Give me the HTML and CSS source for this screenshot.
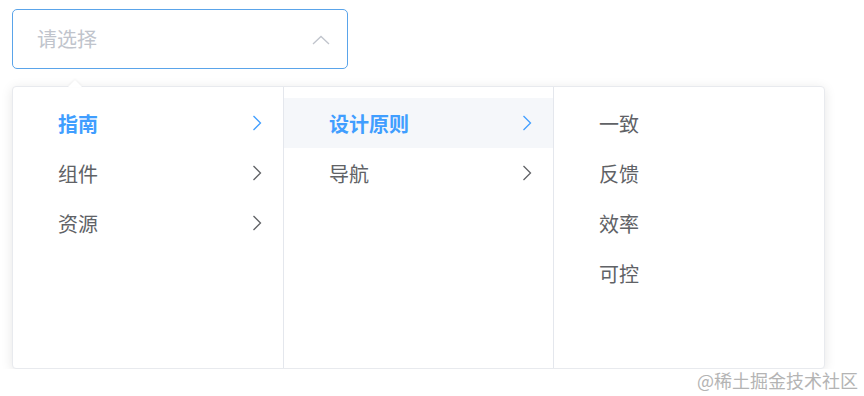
FILE: index.html
```html
<!DOCTYPE html>
<html lang="zh-CN">
<head>
<meta charset="utf-8">
<title>Cascader</title>
<link rel="stylesheet" href="styles.css">
</head>
<body>
<div class="page">
  <div class="input">
    <span class="placeholder">请选择</span>
    <svg class="caret" width="18" height="10" viewBox="0 0 18 10"><path d="M1 9 L9 1.5 L17 9" fill="none" stroke="#c0c4cc" stroke-width="1.3"/></svg>
  </div>
  <div class="panel">
    <span class="popper-arrow"></span>
    <ul class="menu">
      <li class="item active"><span class="label">指南</span><svg class="chev" width="10" height="16" viewBox="0 0 10 16"><path d="M1.5 1 L8.5 8 L1.5 15" fill="none" stroke="currentColor" stroke-width="1.3"/></svg></li>
      <li class="item"><span class="label">组件</span><svg class="chev" width="10" height="16" viewBox="0 0 10 16"><path d="M1.5 1 L8.5 8 L1.5 15" fill="none" stroke="currentColor" stroke-width="1.3"/></svg></li>
      <li class="item"><span class="label">资源</span><svg class="chev" width="10" height="16" viewBox="0 0 10 16"><path d="M1.5 1 L8.5 8 L1.5 15" fill="none" stroke="currentColor" stroke-width="1.3"/></svg></li>
    </ul>
    <ul class="menu mid">
      <li class="item active hover"><span class="label">设计原则</span><svg class="chev" width="10" height="16" viewBox="0 0 10 16"><path d="M1.5 1 L8.5 8 L1.5 15" fill="none" stroke="currentColor" stroke-width="1.3"/></svg></li>
      <li class="item"><span class="label">导航</span><svg class="chev" width="10" height="16" viewBox="0 0 10 16"><path d="M1.5 1 L8.5 8 L1.5 15" fill="none" stroke="currentColor" stroke-width="1.3"/></svg></li>
    </ul>
    <ul class="menu last">
      <li class="item"><span class="label">一致</span></li>
      <li class="item"><span class="label">反馈</span></li>
      <li class="item"><span class="label">效率</span></li>
      <li class="item"><span class="label">可控</span></li>
    </ul>
  </div>
</div>
<div class="watermark">@稀土掘金技术社区</div>
</body>
</html>
```
FILE: styles.css
```css
html, body {
  margin: 0;
  padding: 0;
  background: #ffffff;
  font-family: "Noto Sans CJK SC", "Noto Sans", sans-serif;
}
.page {
  padding: 9px 12px 0 12px;
}
.input {
  box-sizing: border-box;
  width: 336px;
  height: 60px;
  border: 1px solid #5aa4ea;
  border-radius: 5px;
  display: flex;
  align-items: center;
  padding: 0 17px 0 24px;
}
.placeholder {
  flex: 1;
  font-size: 20px;
  color: #c0c4cc;
  line-height: 1;
}
.caret {
  display: block;
  margin-top: 1px;
}
.panel {
  position: relative;
  margin-top: 17px;
  display: flex;
  width: max-content;
  background: #fff;
  border: 1px solid #e8eaee;
  border-radius: 4px;
  box-shadow: 0 2px 12px 0 rgba(0, 0, 0, 0.1);
}
.popper-arrow {
  position: absolute;
  top: -7px;
  left: 55px;
  width: 0;
  height: 0;
  border-left: 7px solid transparent;
  border-right: 7px solid transparent;
  border-bottom: 7px solid #fff;
  filter: drop-shadow(0 -1px 1px rgba(0,0,0,0.05));
}
.menu {
  list-style: none;
  margin: 0;
  padding: 11px 0 0 0;
  width: 270px;
  height: 270px;
  border-right: 1px solid #e4e7ed;
}
.menu.mid {
  width: 269px;
}
.menu.last {
  border-right: none;
}
.item {
  display: flex;
  align-items: center;
  height: 50px;
  padding: 0 21px 0 45px;
  color: #606266;
  font-size: 20px;
}
.item .label {
  flex: 1;
}
.item.active {
  color: #409eff;
  font-weight: 700;
}
.item.hover {
  background: #f5f7fa;
}
.chev {
  display: block;
  color: #606266;
}
.item.active .chev {
  color: #409eff;
}
.watermark {
  position: absolute;
  right: 6px;
  top: 367px;
  font-size: 18px;
  color: #b4b4b4;
  letter-spacing: 0;
}
```
